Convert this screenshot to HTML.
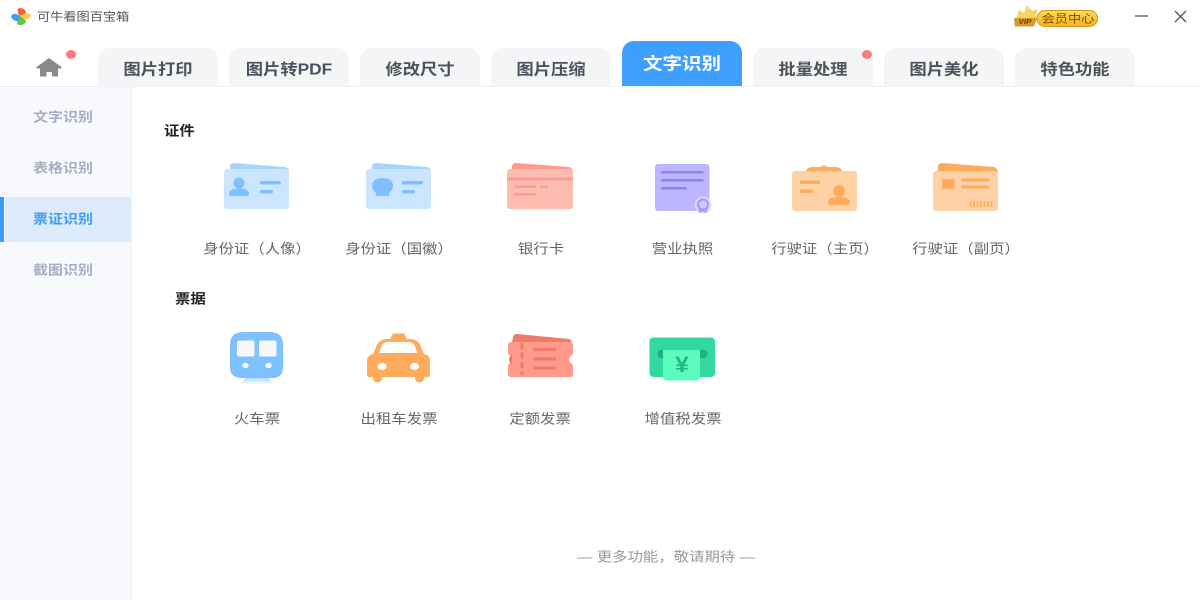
<!DOCTYPE html>
<html lang="zh">
<head>
<meta charset="utf-8">
<title>可牛看图百宝箱</title>
<style>
html,body{margin:0;padding:0;background:#fff}
#p{position:relative;width:1200px;height:600px;overflow:hidden;background:#fff;font-family:"Liberation Sans","Noto Sans CJK SC",sans-serif;filter:blur(.35px)}
.t{position:absolute;white-space:nowrap;line-height:20px;height:20px;text-align:center;transform:scaleY(.88)}
.tab{position:absolute;top:48px;width:120px;height:38px;background:#f4f5f7;border-radius:12px 12px 0 0}
.tab span{display:block;color:#4b505c;font-size:17.3px;font-weight:700;line-height:42px;text-align:center;transform:scaleY(.88)}
.tab.a{top:41px;height:45px;background:#3f9fff}
.tab.a span{color:#fff;font-size:19.500px;line-height:46px}
.side{left:0;width:126px;font-size:15px;font-weight:700;color:#a4adc2;text-align:center}
.lab{font-size:15.400px;color:#666;width:140px}
.h{font-size:15.400px;font-weight:700;color:#222}
.dot{position:absolute;width:10px;height:9px;border-radius:50%;background:#fb7c7c}
svg{position:absolute;left:0;top:0}
</style>
</head>
<body>
<div id="p">
<div class="t" style="left:37px;top:7px;font-size:13.200px;color:#555">可牛看图百宝箱</div>

<div style="position:absolute;left:0;top:86px;width:1200px;height:1px;background:#eef1f8"></div>
<div style="position:absolute;left:0;top:87px;width:131px;height:513px;background:#f8f9fc"></div>
<div style="position:absolute;left:131px;top:87px;width:1px;height:513px;background:#eef1f8"></div>
<div style="position:absolute;left:0;top:197px;width:4px;height:45px;background:#3d9bff"></div>
<div style="position:absolute;left:5px;top:197px;width:126px;height:45px;background:#dcebfb"></div>

<div class="tab" style="left:98px"><span>图片打印</span></div>
<div class="tab" style="left:229px"><span>图片转PDF</span></div>
<div class="tab" style="left:360px"><span>修改尺寸</span></div>
<div class="tab" style="left:491px"><span>图片压缩</span></div>
<div class="tab a" style="left:622px"><span>文字识别</span></div>
<div class="tab" style="left:753px"><span>批量处理</span></div>
<div class="tab" style="left:884px"><span>图片美化</span></div>
<div class="tab" style="left:1015px"><span>特色功能</span></div>
<div class="dot" style="left:66px;top:50px"></div>
<div class="dot" style="left:862px;top:50px"></div>

<div class="t side" style="top:108px">文字识别</div>
<div class="t side" style="top:159px">表格识别</div>
<div class="t side" style="top:210px;color:#3d9bff">票证识别</div>
<div class="t side" style="top:261px">截图识别</div>

<div class="t h" style="left:164px;top:122px">证件</div>
<div class="t h" style="left:175px;top:290px">票据</div>

<svg width="1200" height="600" viewBox="0 0 1200 600">
<defs>
<linearGradient id="tr" x1="0" y1="0" x2="0" y2="1"><stop offset="0" stop-color="#a8d8ff"/><stop offset="1" stop-color="#f2f9ff"/></linearGradient>
<linearGradient id="vp" x1="0" y1="0" x2="0" y2="1"><stop offset="0" stop-color="#ffdc55"/><stop offset="1" stop-color="#f3b321"/></linearGradient>
</defs>
<!-- logo -->
<path d="M20 16C17 13 17 9 19 8C23 8 26 10 26 13C24 14 22 15 20 16Z" fill="#ee5f3a"/>
<path d="M20 16C24 13 28 12 31 15C30 19 26 20 24 19C22 18 21 17 20 16Z" fill="#f5cf47"/>
<path d="M20 16C23 18 26 20 26 22C24 25 20 26 17 24C17 21 18 18 20 16Z" fill="#67c24c"/>
<path d="M20 16C17 14 14 12 11 16C12 20 15 21 18 21C19 19 20 18 20 16Z" fill="#3a9df0"/>
<!-- home -->
<path d="M36.500 67L49 58L61.500 67L61.500 68.500L58 68.500L58 76.500L52 76.500L52 72L46.500 72L46.500 76.500L40 76.500L40 68.500L36.500 68.500Z" fill="#8a8a8a"/>
<!-- vip -->
<path d="M1016 20L1019 10L1024 13L1027 5L1032 11L1037 9L1036 20Z" fill="#f6d366"/>
<path d="M1014 18H1037L1034 26.500H1015Z" fill="#d79b2c"/>
<rect x="1037" y="10.500" width="60.500" height="16" rx="8" fill="url(#vp)" stroke="#d09a1a"/>
<!-- min close -->
<path d="M1135 16H1148" stroke="#555" stroke-width="1.300"/>
<path d="M1175 11L1186 22M1186 11L1175 22" stroke="#555" stroke-width="1.300"/>

<!-- id1 -->
<path d="M230 167Q230 163 234 163L285 167Q289 168 289 172H230Z" fill="#a6d3ff"/>
<rect x="224" y="169" width="65" height="40" rx="3" fill="#cce5ff"/>
<circle cx="239" cy="183" r="5.500" fill="#7fbfff"/>
<path d="M229 193.500Q229 188.500 239 188.500Q249 188.500 249 193.500Q249 196 246 196H232Q229 196 229 193.500Z" fill="#7fbfff"/>
<rect x="260" y="181" width="21" height="3.500" rx="1.700" fill="#7fbfff"/>
<rect x="260" y="190" width="13" height="3.500" rx="1.700" fill="#7fbfff"/>
<!-- id2 -->
<path d="M372 167Q372 163 376 163L427 167Q431 168 431 172H372Z" fill="#a6d3ff"/>
<rect x="366" y="169" width="65" height="40" rx="3" fill="#cce5ff"/>
<path d="M376 196L375.500 192Q372 190 372 186Q372.500 178 382.500 178Q393 178 393 186Q393 190 389.500 192L389 196Z" fill="#7fbfff"/>
<rect x="402" y="181" width="21" height="3.500" rx="1.700" fill="#7fbfff"/>
<rect x="402" y="190" width="13" height="3.500" rx="1.700" fill="#7fbfff"/>
<!-- bank -->
<path d="M512 167Q512 163 516 163L569 167Q573 168 573 172H512Z" fill="#ff9a8c"/>
<rect x="507" y="169" width="66" height="40" rx="3" fill="#ffbdb2"/>
<rect x="507" y="177.500" width="66" height="3" fill="#ff9a8c"/>
<rect x="514" y="185.500" width="22" height="2.500" fill="#ff9a8c"/>
<rect x="540" y="185.500" width="8" height="2.500" fill="#ff9a8c"/>
<rect x="514" y="193" width="22" height="2.500" fill="#ff9a8c"/>
<!-- licence -->
<rect x="655" y="164" width="54.500" height="47" rx="3" fill="#bdb5ff"/>
<rect x="661" y="171" width="42.500" height="2.500" fill="#8f84e6"/>
<rect x="661" y="179" width="42.500" height="2.500" fill="#8f84e6"/>
<rect x="661" y="187" width="25.500" height="2.500" fill="#8f84e6"/>
<circle cx="703" cy="205" r="8.500" fill="#dcd8ff"/>
<path d="M698 208L699.500 213L703 211.500L706.500 213L708 208Z" fill="#a79cf0"/>
<circle cx="703" cy="204.500" r="5" fill="#cfcaff" stroke="#a79cf0" stroke-width="2.200"/>
<!-- driver front -->
<path d="M806 171Q807 167 813 167L821 167Q824 163.500 827 167L835 167Q841 167 842 171Z" fill="#ffab5c"/>
<rect x="792" y="171" width="65" height="40" rx="3" fill="#ffd2a6"/>
<rect x="800" y="180.500" width="20" height="3.500" rx="1.500" fill="#ffab5c"/>
<rect x="800" y="189.500" width="13" height="3.500" rx="1.500" fill="#ffab5c"/>
<circle cx="839" cy="191" r="6" fill="#ffab5c"/>
<path d="M828 202Q828 197 839 197Q850 197 850 202Q850 205 847 205H831Q828 205 828 202Z" fill="#ffab5c"/>
<!-- driver back -->
<path d="M938 167Q938 163 942 163L994 167Q998 168 998 173H937Z" fill="#ffab5c"/>
<rect x="933" y="171" width="65" height="40" rx="3" fill="#ffd2a6"/>
<rect x="942" y="179" width="12.500" height="10" fill="#ffab5c"/>
<rect x="961" y="178.500" width="28.500" height="3" rx="1.500" fill="#ffab5c"/>
<rect x="961" y="185.500" width="28.500" height="3" rx="1.500" fill="#ffab5c"/>
<path d="M970.500 201V207M974 201V207M977.500 201V207M981 201V207M984.500 201V207M988 201V207M991.500 201V207" stroke="#ffab5c" stroke-width="1.700"/>

<!-- train -->
<path d="M246 377H268L273 384H241Z" fill="url(#tr)"/>
<path d="M243 332H270Q283 332 283 345V367Q283 378 272 378H242Q230 378 230 367V345Q230 332 243 332Z" fill="#7fc0ff"/>
<rect x="237" y="340.500" width="17.500" height="16" rx="2" fill="#f6f7f9"/>
<rect x="259" y="340.500" width="17.500" height="16" rx="2" fill="#f6f7f9"/>
<ellipse cx="245.500" cy="365.500" rx="3.200" ry="2.700" fill="#f6f7f9"/>
<ellipse cx="268.500" cy="365.500" rx="3.200" ry="2.700" fill="#f6f7f9"/>
<!-- taxi -->
<rect x="373" y="372" width="9" height="10.500" rx="4.500" fill="#ffab5c"/>
<rect x="415" y="372" width="9" height="10.500" rx="4.500" fill="#ffab5c"/>
<path d="M390 339L393 333.500H404L407 339H411Q419 340 421 347L424 354Q430 355 430 361V375Q430 377 428 377H369Q367 377 367 375V361Q367 355 373 354L376 347Q378 340 386 339Z" fill="#ffab5c"/>
<path d="M379 353L381.500 346Q383 342 388 342H408Q413 342 415 346L417.500 353Z" fill="#fff"/>
<ellipse cx="382" cy="366.500" rx="4.500" ry="3.500" fill="#fff"/>
<ellipse cx="414.500" cy="366.500" rx="4.500" ry="3.500" fill="#fff"/>
<!-- ticket -->
<path d="M513 338Q513 334 517 334L569 339Q572 340 572 345H511Z" fill="#ee7a68"/>
<path d="M511 342H570Q573 342 573 345V354Q569 357 569 359.500Q569 362 573 365V374Q573 377 570 377H511Q508 377 508 374V365Q512 362 512 359.500Q512 357 508 354V345Q508 342 511 342Z" fill="#ff9a8c"/>
<path d="M512 354Q509 357 509 359.500Q509 362 512 365Z" fill="#ee7a68"/>
<path d="M522 343V375" stroke="#ee7a68" stroke-width="3" stroke-dasharray="6 3.500"/>
<rect x="533" y="348" width="23" height="3" rx="1.500" fill="#ee7a68"/>
<rect x="533" y="357.500" width="23" height="3" rx="1.500" fill="#ee7a68"/>
<rect x="533" y="366.500" width="23" height="3" rx="1.500" fill="#ee7a68"/>
<!-- vat -->
<rect x="649.500" y="337.500" width="65.500" height="39.500" rx="4" fill="#32d99f"/>
<circle cx="662" cy="354" r="4.500" fill="#1fae7f"/>
<circle cx="703" cy="354" r="4.500" fill="#1fae7f"/>
<path d="M663 350H700V376Q700 380.500 695.500 380.500H667.500Q663 380.500 663 376Z" fill="#5cfbbd"/>
</svg>

<div class="t" style="left:1040px;top:9px;width:56px;font-size:13.200px;color:#8a4b00">会员中心</div>
<div class="t" style="left:1014px;top:12px;width:22px;font-size:8px;font-weight:700;font-style:italic;color:#6e4206">VIP</div>
<div class="t" style="left:664px;top:354.500px;width:36px;font-size:25px;line-height:20px;font-weight:700;color:#26b587">¥</div>

<div class="t lab" style="left:187px;top:240px">身份证（人像）</div>
<div class="t lab" style="left:329px;top:240px">身份证（国徽）</div>
<div class="t lab" style="left:471px;top:240px">银行卡</div>
<div class="t lab" style="left:612.500px;top:240px">营业执照</div>
<div class="t lab" style="left:755px;top:240px">行驶证（主页）</div>
<div class="t lab" style="left:896px;top:240px">行驶证（副页）</div>
<div class="t lab" style="left:187px;top:410px">火车票</div>
<div class="t lab" style="left:329px;top:410px">出租车发票</div>
<div class="t lab" style="left:470px;top:410px">定额发票</div>
<div class="t lab" style="left:613px;top:410px">增值税发票</div>
<div class="t" style="left:566px;top:548px;width:200px;font-size:15.400px;color:#999">— 更多功能，敬请期待 —</div>
</div>
</body>
</html>
